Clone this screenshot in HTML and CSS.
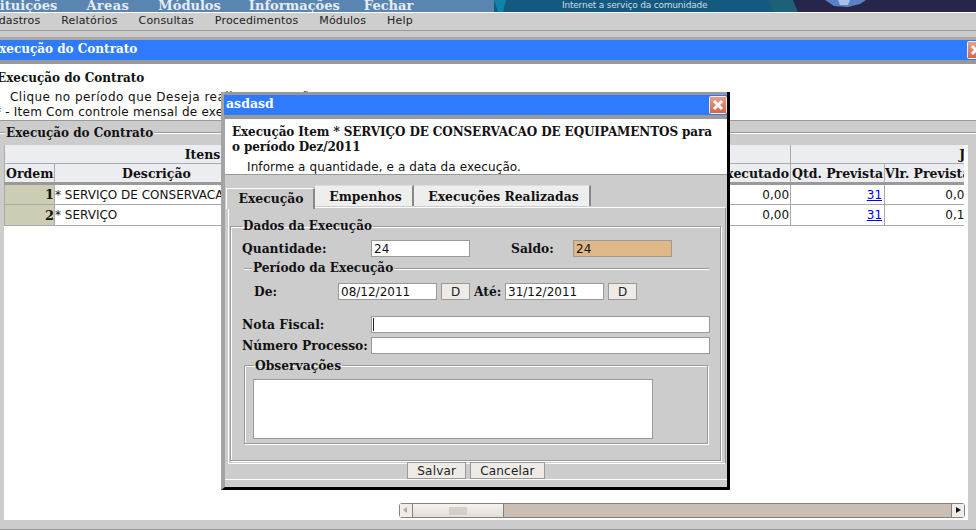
FILE: index.html
```html
<!DOCTYPE html>
<html lang="pt-BR">
<head>
  <meta charset="UTF-8">
  <title>Execução do Contrato</title>
  <link rel="stylesheet" href="styles.css">
</head>
<body>
  <div class="banner">
    <nav class="banner-menu">
      <a>Instituições</a><a class="banner-areas">Areas</a><a>Módulos</a><a class="banner-info">Informações</a><a class="banner-last">Fechar</a>
    </nav>
    <div class="banner-art">
      <svg width="482" height="12" viewBox="0 0 482 12">
        <rect width="482" height="12" fill="#14597f"/>
        <polygon points="0,0 12,0 9,12 4,12" fill="#1182ab"/>
        <polygon points="274,0 299,0 304,12 280,12" fill="#1c6178"/>
        <polygon points="299,0 482,0 482,12 304,12" fill="#27254a"/>
        <polygon points="331,0 372,0 366,4 354,7 340,6" fill="#5b7fc4"/>
        <polygon points="344,0 356,0 354,5 346,5" fill="#a9bfea"/>
      </svg>
      <span class="slogan">Internet a serviço da comunidade</span>
    </div>
  </div>
  <nav class="main-menu">
    <a>Cadastros</a><a>Relatórios</a><a>Consultas</a><a>Procedimentos</a><a>Módulos</a><a>Help</a>
  </nav>
  <div class="gap-bar"></div>
  <div class="window-title">
    <span class="window-title-text">Execução do Contrato</span>
    <svg class="close-icon" width="18" height="18" viewBox="0 0 18 18">
      <defs>
        <linearGradient id="closeFill" x1="0" y1="0" x2="0" y2="1">
          <stop offset="0" stop-color="#e9a088"/>
          <stop offset="1" stop-color="#d4654a"/>
        </linearGradient>
      </defs>
      <rect x="0.5" y="0.5" width="17" height="17" rx="1" fill="url(#closeFill)" stroke="#e8eef8"/>
      <path d="M5 5l8 8M13 5l-8 8" stroke="#fff" stroke-width="3"/>
    </svg>
  </div>
  <section class="intro">
    <h2>Execução do Contrato</h2>
    <p class="intro-click">Clique no período que Deseja realizar execução.</p>
    <p class="intro-note">* - Item Com controle mensal de execução</p>
  </section>
  <section class="contract">
    <div class="group-line"><span>Execução do Contrato</span></div>
    <div class="grid-box">
      <div class="grid-clip">
        <table class="grid">
          <colgroup>
            <col class="c-ordem"><col class="c-desc"><col class="c-unit"><col class="c-mid"><col class="c-exec"><col class="c-qtd"><col class="c-vlr"><col class="c-rest">
          </colgroup>
          <tr>
            <th colspan="3">Itens</th>
            <th colspan="2"></th>
            <th colspan="3" class="month">Janeiro</th>
          </tr>
          <tr class="head-row">
            <th>Ordem</th><th>Descrição</th><th></th><th></th><th class="exec-head">Executado</th><th>Qtd. Prevista</th><th class="left">Vlr. Prevista</th><th></th>
          </tr>
          <tr>
            <td class="ordem">1</td><td class="desc">* SERVIÇO DE CONSERVACAO DE EQUIPAMENTOS</td><td></td><td></td><td class="num">0,00</td><td class="num"><a href="#">31</a></td><td class="num">0,00</td><td></td>
          </tr>
          <tr class="row-two">
            <td class="ordem">2</td><td class="desc">* SERVIÇO</td><td></td><td></td><td class="num">0,00</td><td class="num"><a href="#">31</a></td><td class="num">0,10</td><td></td>
          </tr>
        </table>
      </div>
      <div class="hscroll">
        <span class="sb-arrow sb-left"></span>
        <span class="sb-thumb"><i></i></span>
        <span class="sb-track"></span>
        <span class="sb-arrow sb-right"></span>
      </div>
    </div>
  </section>
  <div class="page-foot"></div>

  <div class="modal">
    <div class="modal-title">
      <span>asdasd</span>
      <svg class="modal-close" width="18" height="18" viewBox="0 0 18 18">
        <rect x="0.5" y="0.5" width="17" height="17" rx="1" fill="url(#closeFill)" stroke="#e8eef8"/>
        <path d="M5 5l8 8M13 5l-8 8" stroke="#fff" stroke-width="3"/>
      </svg>
    </div>
    <div class="modal-head">
      <h3>Execução Item * SERVIÇO DE CONSERVACAO DE EQUIPAMENTOS para o período Dez/2011</h3>
      <p>Informe a quantidade, e a data da execução.</p>
    </div>
    <div class="tabs">
      <span class="tab tab-active">Execução</span>
      <span class="tab tab-empenhos">Empenhos</span>
      <span class="tab tab-realizadas">Execuções Realizadas</span>
    </div>
    <div class="tab-panel">
      <fieldset class="box">
        <legend>Dados da Execução</legend>
        <div class="row row-qtd">
          <label class="lbl-wide">Quantidade:</label>
          <input class="field" type="text" value="24">
          <label class="lbl-saldo">Saldo:</label>
          <input class="field field-saldo" type="text" value="24">
        </div>
        <div class="period">
          <div class="period-title"><span>Período da Execução</span></div>
          <div class="row row-date">
            <label class="lbl-de">De:</label>
            <input class="field field-date" type="text" value="08/12/2011">
            <button class="btn-d" type="button">D</button>
            <label class="lbl-ate">Até:</label>
            <input class="field field-date" type="text" value="31/12/2011">
            <button class="btn-d" type="button">D</button>
          </div>
        </div>
        <div class="row row-nota">
          <label class="lbl-wide">Nota Fiscal:</label>
          <input class="field field-long field-focus" type="text">
        </div>
        <div class="row row-proc">
          <label class="lbl-wide">Número Processo:</label>
          <input class="field field-long" type="text">
        </div>
        <fieldset class="box box-obs">
          <legend>Observações</legend>
          <textarea class="obs-text"></textarea>
        </fieldset>
      </fieldset>
    </div>
    <div class="modal-actions">
      <button class="btn" type="button">Salvar</button>
      <button class="btn" type="button">Cancelar</button>
    </div>
  </div>
</body>
</html>
```

FILE: styles.css
```css
html, body {
  margin: 0;
  padding: 0;
  height: 100%;
}

body {
  width: 976px;
  height: 530px;
  overflow: hidden;
  position: relative;
  background-color: #ccc;
  font-family: "DejaVu Sans", sans-serif;
  font-size: 12px;
  color: #111;
  display: flex;
  flex-direction: column;
}

/* top banner */
.banner {
  display: flex;
  height: 12px;
  flex: none;
  border-bottom: 1px solid #fff;
  overflow: hidden;
}

.banner-menu {
  width: 494px;
  flex: none;
  background-color: #5a85b0;
  display: flex;
  gap: 29px;
  margin: 0;
  white-space: nowrap;
  font-family: "DejaVu Serif", serif;
  font-weight: bold;
  font-size: 13px;
  line-height: 12px;
  color: #e6edf4;
  overflow: hidden;
}

.banner-menu a:first-child {
  margin-left: -29px;
}

.banner-areas {
  letter-spacing: 0.4px;
}

.banner-info {
  margin-left: -1px;
}

.banner-last {
  margin-left: -5px;
}

.banner-art {
  position: relative;
  flex: 1;
  height: 12px;
  overflow: hidden;
}

.banner-art svg {
  display: block;
}

.slogan {
  position: absolute;
  left: 68px;
  top: -1px;
  font-size: 9px;
  letter-spacing: -0.2px;
  line-height: 12px;
  white-space: nowrap;
  color: #cfdde6;
}

.main-menu {
  height: 17px;
  flex: none;
  background-color: #cecece;
  border-bottom: 1px solid #999;
  display: flex;
  gap: 21px;
  white-space: nowrap;
  font-size: 11px;
  line-height: 16px;
  letter-spacing: 0.15px;
  color: #222;
  overflow: hidden;
}

.main-menu a:first-child {
  margin-left: -16px;
}

.gap-bar {
  height: 6px;
  flex: none;
  background-color: #ccc;
  border-bottom: 3px solid #aaa;
}

.window-title {
  height: 20px;
  flex: none;
  background-color: #2e7bff;
  border-bottom: 4px solid #999;
  position: relative;
  overflow: hidden;
  color: #fff;
  font-family: "DejaVu Serif", serif;
  font-weight: bold;
  font-size: 12px;
  line-height: 19px;
}

.window-title-text {
  display: block;
  margin-left: -10px;
}

.close-icon {
  position: absolute;
  left: 967px;
  top: 1px;
}

/* intro text */
.intro {
  height: 56px;
  flex: none;
  background-color: #fff;
  border-bottom: 1px solid #999;
  overflow: hidden;
}

.intro h2 {
  margin: 7px 0 0 -3px;
  font-family: "DejaVu Serif", serif;
  font-size: 12px;
  line-height: 15px;
}

.intro p {
  margin: 0;
  font-size: 12px;
  line-height: 15px;
  white-space: nowrap;
}

.intro .intro-click {
  margin: 4px 0 0 10px;
  letter-spacing: 0.47px;
}

.intro .intro-note {
  margin-left: -5px;
  letter-spacing: 0.22px;
}

/* contract grid */
.contract {
  flex: 1;
  display: flex;
  flex-direction: column;
  min-height: 0;
}

.group-line {
  height: 24px;
  flex: none;
  background: linear-gradient(#ccc 11px, #999 11px, #999 12px, #fff 12px, #fff 13px, #ccc 13px);
}

.group-line span {
  display: inline-block;
  height: 24px;
  background-color: #ccc;
  margin-left: 5px;
  padding: 0 1px;
  font-family: "DejaVu Serif", serif;
  font-weight: bold;
  font-size: 12px;
  line-height: 25px;
}

.grid-box {
  flex: 1;
  margin: 0 8px 0 4px;
  background-color: #fff;
  padding-right: 4px;
  position: relative;
  min-height: 0;
}

.grid-clip {
  overflow: hidden;
  height: 100%;
}

.grid {
  border-collapse: collapse;
  table-layout: fixed;
  width: 1174px;
}

.c-ordem { width: 50px; }
.c-desc { width: 204px; }
.c-unit { width: 142px; }
.c-mid { width: 327px; }
.c-exec { width: 63px; }
.c-qtd { width: 94px; }
.c-vlr { width: 89px; }
.c-rest { width: 205px; }

.grid th {
  height: 18px;
  padding: 0 1px;
  background-color: #ecedf1;
  border: 1px solid #aaa;
  border-top: 0;
  font-family: "DejaVu Serif", serif;
  font-weight: bold;
  font-size: 12.5px;
  white-space: nowrap;
  overflow: hidden;
  text-align: center;
}

.grid .head-row th {
  height: 18px;
  border-bottom: 3px solid #999;
}

.grid .month {
  text-align: center;
}

.grid th.exec-head {
  text-align: right;
  direction: rtl;
}

.grid th.left {
  text-align: left;
  padding-left: 0;
}

.grid td {
  height: 19px;
  padding: 0 1px;
  border: 1px solid #aaa;
  border-top: 0;
  font-size: 12px;
  white-space: nowrap;
  overflow: hidden;
}

.grid .row-two td {
  height: 20px;
}

.grid td.ordem {
  background-color: #cdcdb5;
  text-align: right;
  padding-right: 0;
  font-family: "DejaVu Serif", serif;
  font-weight: bold;
  font-size: 13px;
}

.grid td.desc {
  padding-left: 0;
}

.grid td.num {
  text-align: right;
  padding-right: 1px;
}

.grid td.num a {
  margin-right: 1px;
}

.grid a {
  color: #00e;
}

/* fake gtk scrollbar */
.hscroll {
  position: absolute;
  left: 395px;
  top: 358px;
  width: 566px;
  height: 15px;
  display: flex;
  background-color: #c9bfb4;
  border: 1px solid #8a8078;
  border-radius: 3px;
  box-sizing: border-box;
}

.sb-arrow {
  width: 12px;
  flex: none;
  position: relative;
  background-color: #f0ede8;
}

.sb-arrow::after {
  content: "";
  position: absolute;
  top: 3px;
  border: 3px solid transparent;
  border-top-width: 3px;
}

.sb-left::after {
  left: 0;
  border-right: 4px solid #aaa;
}

.sb-right {
  border-left: 1px solid #8a8078;
}

.sb-right::after {
  left: 4px;
  border-left: 5px solid #111;
}

.sb-thumb {
  width: 92px;
  flex: none;
  box-sizing: border-box;
  border-left: 1px solid #8a8078;
  border-right: 1px solid #8a8078;
  background: linear-gradient(#f5f3f0, #e2ded8);
  display: flex;
  align-items: center;
  justify-content: center;
}

.sb-thumb i {
  display: block;
  width: 18px;
  height: 8px;
  background-image: radial-gradient(#fff 40%, #cfcac2 45%, transparent 70%);
  background-size: 2px 2px;
}

.sb-track {
  flex: 1;
}

.page-foot {
  height: 10px;
  flex: none;
  box-sizing: border-box;
  border-bottom: 1px solid #999;
}

/* modal */
.modal {
  position: absolute;
  left: 221px;
  top: 92px;
  width: 509px;
  height: 398px;
  box-sizing: border-box;
  background-color: #ccc;
  border-left: 4px solid #a4a4a4;
  border-right: 3px solid #000;
  border-bottom: 3px solid #000;
}

.modal-title {
  height: 20px;
  background-color: #2e7bff;
  border-top: 3px solid #999;
  border-bottom: 4px solid #999;
  margin-left: -1px;
  position: relative;
  color: #fff;
  font-family: "DejaVu Serif", serif;
  font-weight: bold;
  font-size: 12.5px;
  line-height: 17px;
  padding-left: 2px;
}

.modal-close {
  position: absolute;
  right: 0;
  top: 1px;
}

.modal-head {
  height: 56px;
  background-color: #fff;
  border-bottom: 1px solid #999;
  padding-left: 7px;
  box-sizing: border-box;
}

.modal-head h3 {
  margin: 0;
  padding-top: 6px;
  width: 490px;
  font-family: "DejaVu Serif", serif;
  font-size: 12px;
  letter-spacing: -0.1px;
  line-height: 15px;
}

.modal-head p {
  margin: 5px 0 0 15px;
  font-size: 12px;
  letter-spacing: 0.1px;
  line-height: 15px;
}

.tabs {
  display: flex;
  height: 21px;
  margin: 10px 0 0 1px;
  font-family: "DejaVu Serif", serif;
  font-weight: bold;
  font-size: 12.4px;
}

.tab {
  box-sizing: border-box;
  text-align: center;
  background-color: #eee;
  border-right: 2px solid #888;
  border-top: 1px solid #ddd;
  line-height: 21px;
}

.tab-active {
  width: 89px;
  background-color: #ccc;
  margin-top: 3px;
  padding-left: 2px;
  border-top: 1px solid #fff;
  border-left: 1px solid #fff;
  height: 21px;
  line-height: 20px;
}

.tab-empenhos {
  width: 99px;
  padding-left: 4px;
}

.tab-realizadas {
  width: 177px;
  padding-left: 4px;
}

.tab-panel {
  height: 257px;
  box-sizing: border-box;
  margin: 1px 1px 0 3px;
  border: 1px solid #fff;
  border-right-color: #999;
  border-bottom-color: #fff;
}

.box {
  margin: 11px 4px 0 1px;
  padding: 0 11px;
  height: 242px;
  box-sizing: border-box;
  border: 1px solid #999;
  box-shadow: inset 1px 1px 0 #fff, 1px 1px 0 #fff;
  min-width: 0;
}

.box legend {
  padding: 0 1px;
  margin-left: 0;
  font-family: "DejaVu Serif", serif;
  font-weight: bold;
  font-size: 12px;
  line-height: 15px;
}

.row {
  display: flex;
  align-items: center;
  font-family: "DejaVu Serif", serif;
  font-weight: bold;
  font-size: 12.3px;
}

.row-qtd {
  margin-top: 6px;
}

.lbl-wide {
  width: 129px;
  flex: none;
  white-space: nowrap;
}

.lbl-saldo {
  width: 62px;
  margin-left: 41px;
  flex: none;
}

.field {
  box-sizing: border-box;
  width: 99px;
  height: 17px;
  border: 1px solid #999;
  background-color: #fff;
  padding: 0 2px;
  margin: 0;
  font-family: "DejaVu Sans", sans-serif;
  font-size: 12px;
  color: #111;
  flex: none;
  border-radius: 0;
  outline: 0;
}

.field-saldo {
  background-color: #deb887;
}

.field-long {
  width: 339px;
}

/* text caret in the focused field */
.field-focus {
  background: linear-gradient(#222, #222) 1px 1px / 1px 13px no-repeat #fff;
}

.period {
  margin-top: 4px;
}

.period-title {
  height: 15px;
  margin-left: 2px;
  background: linear-gradient(#ccc 7px, #999 7px, #999 8px, #fff 8px, #fff 9px, #ccc 9px);
}

.period-title span {
  display: inline-block;
  margin-left: 8px;
  padding: 0 1px;
  background-color: #ccc;
  font-family: "DejaVu Serif", serif;
  font-weight: bold;
  font-size: 12.1px;
  line-height: 15px;
}

.row-date {
  margin-top: 7px;
}

.lbl-de {
  width: 84px;
  margin-left: 12px;
  flex: none;
}

.lbl-ate {
  width: 31px;
  margin-left: 4px;
  flex: none;
}

.btn-d {
  width: 29px;
  height: 17px;
  margin: 0 0 0 4px;
  padding: 0;
  border: 1px solid #999;
  background-color: #eeebe7;
  font-family: "DejaVu Sans", sans-serif;
  font-size: 12px;
  color: #222;
  flex: none;
}

.row-nota {
  margin-top: 16px;
}

.row-proc {
  margin-top: 4px;
}

.box-obs {
  margin: 4px 1px 0 2px;
  height: 86px;
  padding: 0 8px;
}

.box-obs legend {
  margin-left: 1px;
  font-size: 12.3px;
}

.obs-text {
  display: block;
  width: 400px;
  height: 60px;
  box-sizing: border-box;
  margin: 6px 0 0;
  border: 1px solid #999;
  background-color: #fff;
  resize: none;
  outline: 0;
}

.modal-actions {
  display: flex;
  justify-content: center;
  gap: 4px;
  margin: -2px 0 0;
  border-bottom: 1px solid #fff;
}

.btn {
  height: 17px;
  margin: 0;
  padding: 1px 9px 0;
  border: 1px solid #999;
  background-color: #eeebe7;
  font-family: "DejaVu Sans", sans-serif;
  font-size: 12px;
  letter-spacing: 0.2px;
  line-height: 15px;
  color: #222;
}
```
